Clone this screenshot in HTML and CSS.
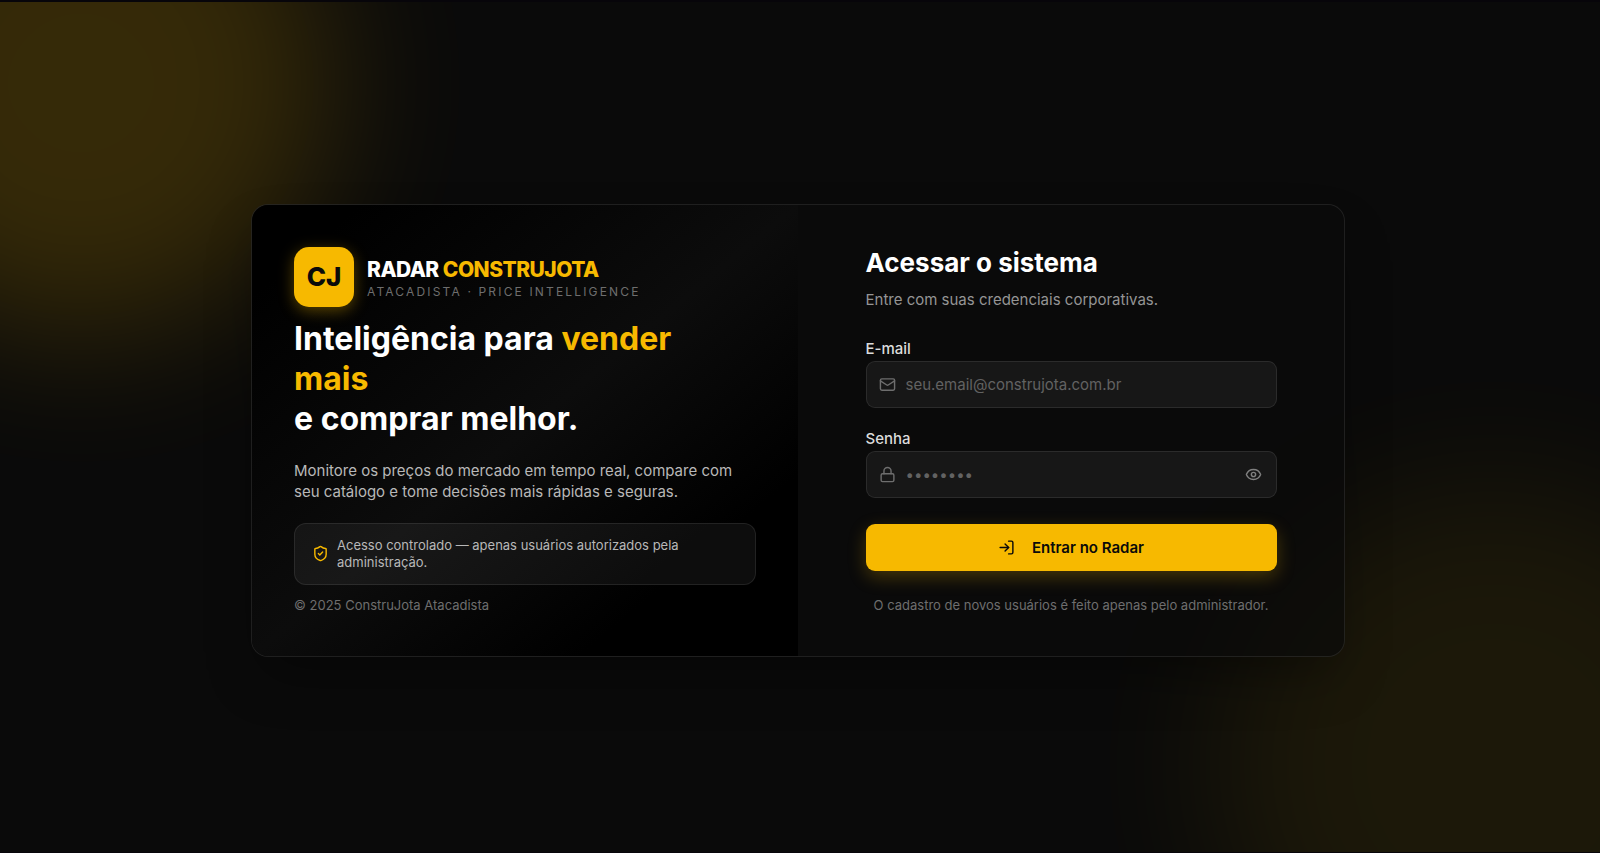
FILE: index.html
```html
<!DOCTYPE html>
<html lang="pt-BR">
<head>
    <meta charset="UTF-8">
    <meta name="viewport" content="width=device-width, initial-scale=1.0">
    <title>Radar ConstruJota</title>
    <link rel="stylesheet" href="styles.css">
</head>
<body>
    <div class="page">
        <div class="glow glow-top"></div>
        <div class="glow glow-bottom"></div>

        <main class="card">
            <section class="brand-panel">
                <div class="brand">
                    <div class="brand-logo">CJ</div>
                    <div>
                        <div class="brand-name">RADAR <span class="accent">CONSTRUJOTA</span></div>
                        <div class="brand-tagline">Atacadista · Price Intelligence</div>
                    </div>
                </div>

                <div class="pitch">
                    <h1>Inteligência para <span class="accent">vender mais</span><br>e comprar melhor.</h1>
                    <p>Monitore os preços do mercado em tempo real, compare com seu catálogo e tome decisões mais rápidas e seguras.</p>
                    <div class="notice">
                        <svg class="icon accent" viewBox="0 0 24 24">
                            <path d="M20 13c0 5-3.500 7.500-7.660 8.950a1 1 0 0 1-.670-.010C7.500 20.500 4 18 4 13V6a1 1 0 0 1 1-1c2 0 4.500-1.200 6.240-2.720a1.170 1.170 0 0 1 1.520 0C14.510 3.810 17 5 19 5a1 1 0 0 1 1 1z"/>
                            <path d="m9 12 2 2 4-4"/>
                        </svg>
                        <span>Acesso controlado — apenas usuários autorizados pela administração.</span>
                    </div>
                </div>

                <div class="copyright">© 2025 ConstruJota Atacadista</div>
            </section>

            <section class="login-panel">
                <form class="login-form" id="loginForm">
                    <h2>Acessar o sistema</h2>
                    <p class="subtitle">Entre com suas credenciais corporativas.</p>

                    <div class="form-group">
                        <label for="email">E-mail</label>
                        <div class="input-wrapper">
                            <svg class="icon" viewBox="0 0 24 24">
                                <rect x="2" y="4" width="20" height="16" rx="2"/>
                                <path d="m22 7-8.970 5.700a1.940 1.940 0 0 1-2.060 0L2 7"/>
                            </svg>
                            <input type="email" id="email" placeholder="seu.email@construjota.com.br" required>
                        </div>
                    </div>

                    <div class="form-group">
                        <label for="password">Senha</label>
                        <div class="input-wrapper">
                            <svg class="icon" viewBox="0 0 24 24">
                                <rect x="3" y="11" width="18" height="11" rx="2"/>
                                <path d="M7 11V7a5 5 0 0 1 10 0v4"/>
                            </svg>
                            <input type="password" id="password" placeholder="••••••••" required>
                            <button type="button" class="btn-eye" id="togglePassword" aria-label="Mostrar senha">
                                <svg class="icon" viewBox="0 0 24 24">
                                    <path d="M2.060 12.350a1 1 0 0 1 0-.700 10.750 10.750 0 0 1 19.880 0 1 1 0 0 1 0 .700 10.750 10.750 0 0 1-19.880 0"/>
                                    <circle cx="12" cy="12" r="3"/>
                                </svg>
                            </button>
                        </div>
                    </div>

                    <button type="submit" class="btn-submit">
                        <svg class="icon" viewBox="0 0 24 24">
                            <path d="M15 3h4a2 2 0 0 1 2 2v14a2 2 0 0 1-2 2h-4"/>
                            <path d="m10 17 5-5-5-5"/>
                            <path d="M15 12H3"/>
                        </svg>
                        Entrar no Radar
                    </button>

                    <p class="form-note">O cadastro de novos usuários é feito apenas pelo administrador.</p>
                </form>
            </section>
        </main>
    </div>

    <script>
        document.getElementById('togglePassword').addEventListener('click', () => {
            const password = document.getElementById('password');
            password.type = password.type === 'password' ? 'text' : 'password';
        });

        document.getElementById('loginForm').addEventListener('submit', (e) => {
            e.preventDefault();
        });
    </script>
</body>
</html>
```

FILE: styles.css
```css
:root {
    --primary-color: #f7b900;
    --background: #0a0a0a;
    --white: #ffffff;
    --border-color: rgba(255, 255, 255, 0.09);
    --text-muted: #6e6e6e;
}

* {
    margin: 0;
    padding: 0;
    box-sizing: border-box;
}

body {
    font-family: 'Inter', sans-serif;
    font-size: 15px;
    line-height: 21px;
    background-color: var(--background);
    color: var(--white);
}

.page {
    position: relative;
    display: flex;
    justify-content: center;
    align-items: center;
    min-height: 100vh;
    padding: 24px 20px 18px 16px;
    border-top: 2px solid #07050a;
    border-bottom: 1px solid #07050a;
    overflow: hidden;
}

/* Background glows */
.glow {
    position: absolute;
    border-radius: 50%;
    background-color: var(--primary-color);
    filter: blur(72px);
}

.glow-top {
    top: -171px;
    left: -171px;
    width: 504px;
    height: 504px;
    opacity: 0.18;
}

.glow-bottom {
    right: -173px;
    bottom: -193px;
    width: 560px;
    height: 560px;
    background-color: #ffcc00;
    opacity: 0.07;
}

.card {
    position: relative;
    display: grid;
    grid-template-columns: 1fr 1fr;
    width: 100%;
    max-width: 1094px;
    border: 1px solid var(--border-color);
    border-radius: 17px;
    background-color: rgba(10, 10, 10, 0.7);
    box-shadow: 0 26px 54px -12px rgba(0, 0, 0, 0.4);
    overflow: hidden;
}

.accent {
    color: var(--primary-color);
}

.icon {
    flex-shrink: 0;
    width: 17px;
    height: 17px;
    fill: none;
    stroke: currentColor;
    stroke-width: 2;
    stroke-linecap: round;
    stroke-linejoin: round;
}

/* Left side */
.brand-panel {
    display: flex;
    flex-direction: column;
    justify-content: space-between;
    gap: 12px;
    padding: 42px;
    background: linear-gradient(to bottom right, #000000 10%, #0c0c0c 50%, #000000 80%);
}

.brand {
    display: flex;
    align-items: center;
    gap: 13px;
}

.brand-logo {
    display: flex;
    align-items: center;
    justify-content: center;
    width: 60px;
    height: 60px;
    border-radius: 15px;
    background-color: var(--primary-color);
    color: #0a0a0a;
    font-size: 26px;
    font-weight: 800;
    box-shadow: 0 4px 15px rgba(247, 185, 0, 0.35);
}

.brand-name {
    font-size: 21px;
    line-height: 30px;
    font-weight: 800;
    letter-spacing: -0.025em;
}

.brand-tagline {
    font-size: 12px;
    line-height: 13px;
    letter-spacing: 0.18em;
    text-transform: uppercase;
    color: var(--text-muted);
}

.pitch {
    display: flex;
    flex-direction: column;
    gap: 21px;
}

h1 {
    max-width: 440px;
    font-size: 32px;
    line-height: 40px;
    font-weight: 700;
}

.pitch p {
    color: #b8b8b8;
}

.notice {
    display: flex;
    align-items: center;
    gap: 8px;
    padding: 13px 17px;
    border: 1px solid var(--border-color);
    border-radius: 12px;
    background-color: rgba(255, 255, 255, 0.05);
    color: #b8b8b8;
    font-size: 13px;
    line-height: 17px;
}

.copyright,
.form-note {
    font-size: 13px;
    line-height: 17px;
    color: var(--text-muted);
}

/* Right side */
.login-panel {
    display: flex;
    align-items: center;
    justify-content: center;
    padding: 40px 42px;
}

.login-form {
    width: 100%;
    max-width: 411px;
}

h2 {
    font-size: 26px;
    line-height: 34px;
    font-weight: 700;
}

.subtitle {
    margin-top: 9px;
    margin-bottom: 28px;
    color: #959595;
}

.form-group {
    margin-bottom: 20px;
}

label {
    display: block;
    margin-bottom: 1px;
    line-height: 22px;
    color: #dcdcdc;
    font-weight: 500;
}

.input-wrapper {
    display: flex;
    align-items: center;
    gap: 10px;
    height: 47px;
    padding: 0 12px;
    border: 1px solid var(--border-color);
    border-radius: 9px;
    background-color: #171717;
    color: var(--text-muted);
}

.input-wrapper:focus-within {
    border-color: var(--primary-color);
}

input {
    flex: 1;
    min-width: 0;
    height: 100%;
    border: none;
    outline: none;
    background: transparent;
    color: var(--white);
    font-family: inherit;
    font-size: 15px;
}

input::placeholder {
    color: #626262;
}

button {
    border: none;
    cursor: pointer;
    font-family: inherit;
}

.btn-eye {
    display: flex;
    padding: 2px;
    background: transparent;
    color: #808080;
}

.btn-submit {
    display: flex;
    align-items: center;
    justify-content: center;
    gap: 17px;
    width: 100%;
    height: 47px;
    margin-top: 26px;
    border-radius: 9px;
    background-color: var(--primary-color);
    color: #0a0a0a;
    font-size: 15px;
    font-weight: 600;
    box-shadow: 0 6px 18px rgba(247, 185, 0, 0.25);
}

.form-note {
    margin-top: 26px;
    text-align: center;
}
```
